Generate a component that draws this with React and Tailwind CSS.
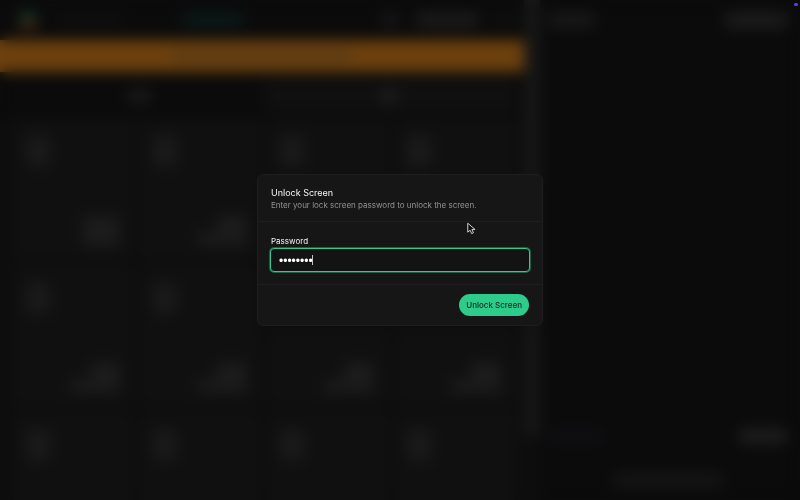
import { useState } from "react"

const products = [
  { id: 1, wide: false },
  { id: 2, wide: true },
  { id: 3, wide: true },
  { id: 4, wide: true },
  { id: 5, wide: true },
  { id: 6, wide: true },
  { id: 7, wide: true },
  { id: 8, wide: true },
  { id: 9, wide: true },
  { id: 10, wide: true },
  { id: 11, wide: true },
  { id: 12, wide: true },
]

function ProductCard({ wide }) {
  return (
    <div className="flex h-[139px] flex-col justify-between rounded-lg bg-[#212122] pt-4 pr-[14px] pb-3 pl-3">
      <div className="h-8 w-6 rounded-lg bg-[#343434]" />
      <div className="flex flex-col items-end">
        <div className={wide ? "h-4 w-7 bg-[#3a3a3a]" : "h-4 w-9 bg-[#383838]"} />
        <div className={wide ? "h-[14px] w-12 bg-[#363636]" : "h-[14px] w-9 bg-[#383838]"} />
      </div>
    </div>
  )
}

// Point of sale screen that sits behind the lock dialog
function PosScreen() {
  return (
    <div aria-hidden="true" className="flex h-screen overflow-hidden bg-[#161617]">
      <div className="flex flex-1 flex-col">
        <header className="flex h-10 shrink-0 items-center bg-[#161617] pr-3 pl-[18px]">
          <div className="h-5 w-5 overflow-hidden rounded-full">
            <div className="h-[10px] bg-[#1a5c44]" />
            <div className="h-[10px] bg-[#8a5026]" />
          </div>
          <div className="ml-5 h-3 w-16 bg-[#1d1d1d]" />
          <div className="ml-[60px] h-3 w-[62px] rounded-full bg-[#163634]" />
          <div className="ml-auto h-4 w-4 rounded-full bg-[#303034]" />
          <div className="ml-4 h-4 w-[66px] rounded-full bg-[#343434]" />
          <div className="ml-4 h-4 w-4 rounded-full bg-[#202022]" />
        </header>

        <div className="flex h-8 shrink-0 items-center justify-center bg-[#da811c]">
          <div className="h-3 w-[180px] bg-[#b87828]" />
        </div>

        <div className="mt-2 flex h-8 shrink-0 pr-[10px] pl-[14px]">
          <div className="flex flex-1 items-center justify-center bg-[#161617]">
            <div className="h-3 w-6 bg-[#363636]" />
          </div>
          <div className="flex flex-1 items-center justify-center bg-[#202022]">
            <div className="h-3 w-5 bg-[#3a3a3a]" />
          </div>
        </div>

        <div className="mt-[7px] grid grid-cols-4 gap-2 bg-[#1b1b1c] pr-[10px] pl-[14px]">
          {products.map((p) => (
            <ProductCard key={p.id} wide={p.wide} />
          ))}
        </div>
      </div>

      <div className="w-4 bg-[#1b1b1c]">
        <div className="h-[436px] bg-[#2e2e2e]" />
      </div>

      <div className="flex w-[260px] flex-col justify-between bg-[#161616] pr-3 pl-2">
        <div className="mt-3 flex items-center justify-between">
          <div className="h-4 w-12 rounded-full bg-[#303030]" />
          <div className="h-4 w-16 rounded-full bg-[#383838]" />
        </div>
        <div className="mb-3 flex flex-col items-center gap-7">
          <div className="flex w-full items-center justify-between">
            <div className="h-4 w-14 rounded-full bg-[#1e1e26]" />
            <div className="h-4 w-[50px] rounded-full bg-[#3a3a3a]" />
          </div>
          <div className="h-4 w-[112px] rounded-full bg-[#282828]" />
        </div>
      </div>
    </div>
  )
}

function Cursor() {
  return (
    <svg
      viewBox="0 0 12 16"
      className="pointer-events-none absolute top-[222px] left-[466px] h-[13px] w-[10px]"
    >
      <path
        d="M2 1.5v11l2.8-2.4 2 4.2 2.2-1-1.9-4.1h3.9z"
        fill="#101010"
        stroke="#d4d4d4"
        strokeWidth="1.2"
        strokeLinejoin="round"
      />
    </svg>
  )
}

export default function App() {
  const [password, setPassword] = useState("password")

  const handleSubmit = (e) => {
    e.preventDefault()
  }

  return (
    <div className="relative min-h-screen bg-[#161617] font-['Inter','Liberation_Sans',sans-serif]">
      <PosScreen />

      <div className="fixed inset-0 flex items-center justify-center bg-black/50 backdrop-blur-[7px]">
        <form
          onSubmit={handleSubmit}
          role="dialog"
          aria-labelledby="lock-title"
          className="w-full max-w-[286px] rounded-md border border-[#1e1e20] bg-[#161617] shadow-lg"
        >
          <div className="border-b border-[#1e1e20] px-[13px] pt-3 pb-[10px]">
            <h2 id="lock-title" className="text-[9px] leading-3 text-[#f4f4f4]">
              Unlock Screen
            </h2>
            <p className="text-[8px] leading-3 text-[#929294]">
              Enter your lock screen password to unlock the screen.
            </p>
          </div>

          <div className="border-b border-[#1e1e20] px-3 pt-[13px] pb-3">
            <label htmlFor="password" className="block px-px text-[8px] leading-3 text-[#f4f4f4]">
              Password
            </label>
            <div className="relative mt-px">
              <input
                id="password"
                type="password"
                value={password}
                onChange={(e) => setPassword(e.target.value)}
                autoFocus
                className="block h-6 w-full rounded border border-[#2dcc8b] bg-[#131314] px-2 pt-[2px] font-['Liberation_Sans',sans-serif] text-[12px] text-white caret-transparent ring-1 ring-[#2dcc8b]/40 outline-none"
              />
              <span className="pointer-events-none absolute top-[7px] left-[42px] h-[10px] w-px bg-[#c4c4c4]" />
            </div>
          </div>

          <div className="flex justify-end px-[13px] py-[9px]">
            <button
              type="submit"
              className="h-[22px] rounded-full bg-[#2dcc8b] px-[7px] text-[8px] font-medium text-[#10281e]"
            >
              Unlock Screen
            </button>
          </div>
        </form>
      </div>

      <Cursor />
      <span className="absolute top-[3px] right-[2px] h-[3px] w-[4px] rounded-full bg-[#4b49e6]" />
    </div>
  )
}
